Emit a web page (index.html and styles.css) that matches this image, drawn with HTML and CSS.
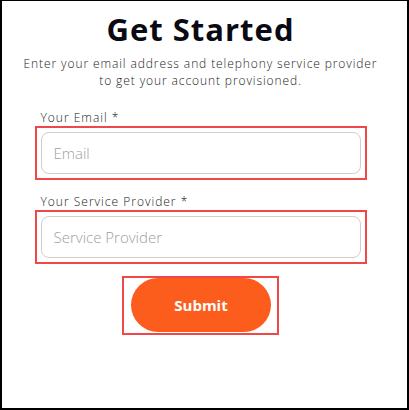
FILE: index.html
```html
<!DOCTYPE html>
<html>
<head>
    <title>Get Started</title>
    <link rel="stylesheet" href="styles.css">
</head>
<body>
    <div class="frame">
        <h1 class="title">Get Started</h1>
        <p class="intro">Enter your email address and telephony service provider to get your account provisioned.</p>
        <form id="signup-form" class="signup">
            <label class="field-label" for="email">Your Email *</label>
            <div class="mark">
                <input type="text" id="email" class="field" placeholder="Email">
            </div>
            <label class="field-label" for="provider">Your Service Provider *</label>
            <div class="mark">
                <input type="text" id="provider" class="field" placeholder="Service Provider">
            </div>
            <div class="mark mark-button">
                <button type="submit" class="submit">Submit</button>
            </div>
        </form>
    </div>
</body>
</html>
```

FILE: styles.css
```css
html, body {
    margin: 0;
    padding: 0;
    background-color: #fff;
}

.frame {
    box-sizing: border-box;
    width: 409px;
    height: 410px;
    border: 2px solid #000;
    border-top-width: 1px;
    padding-right: 8px;
    font-family: "Open Sans", "Liberation Sans", sans-serif;
    color: #222;
}

.title {
    margin: 0;
    padding-top: 8px;
    text-align: center;
    font-size: 31px;
    font-weight: 700;
    letter-spacing: 1px;
    line-height: 40px;
    color: #0a0a14;
}

.intro {
    width: 364px;
    margin: 6px auto 0;
    text-align: center;
    font-size: 12px;
    font-weight: 300;
    letter-spacing: 0.9px;
    line-height: 17px;
    color: #222;
}

.signup {
    width: 332px;
    margin: 19px auto 0;
    display: flex;
    flex-direction: column;
}

.field-label {
    display: block;
    padding-left: 6px;
    margin-top: 2px;
    font-size: 12px;
    font-weight: 300;
    letter-spacing: 1px;
    line-height: 16px;
    color: #222;
}

.mark {
    box-sizing: border-box;
    border: 2px solid #f04848;
    padding: 4px;
    margin-bottom: 12px;
}

.field {
    box-sizing: border-box;
    display: block;
    width: 100%;
    height: 42px;
    padding: 0 12px;
    border: 1px solid #cfcfcf;
    border-radius: 8px;
    font-family: "Open Sans", "Liberation Sans", sans-serif;
    font-size: 15px;
    font-weight: 300;
    color: #333;
}

.field::placeholder {
    color: #a0a0a0;
}

.mark-button {
    align-self: center;
    width: 157px;
    padding: 0 7px 1px;
    margin-bottom: 0;
}

.submit {
    display: block;
    width: 140px;
    height: 54px;
    border: none;
    border-radius: 27px;
    background-color: #fd5d1c;
    color: #fff;
    font-family: "Open Sans", "Liberation Sans", sans-serif;
    font-size: 15px;
    font-weight: 700;
    cursor: pointer;
}
```
